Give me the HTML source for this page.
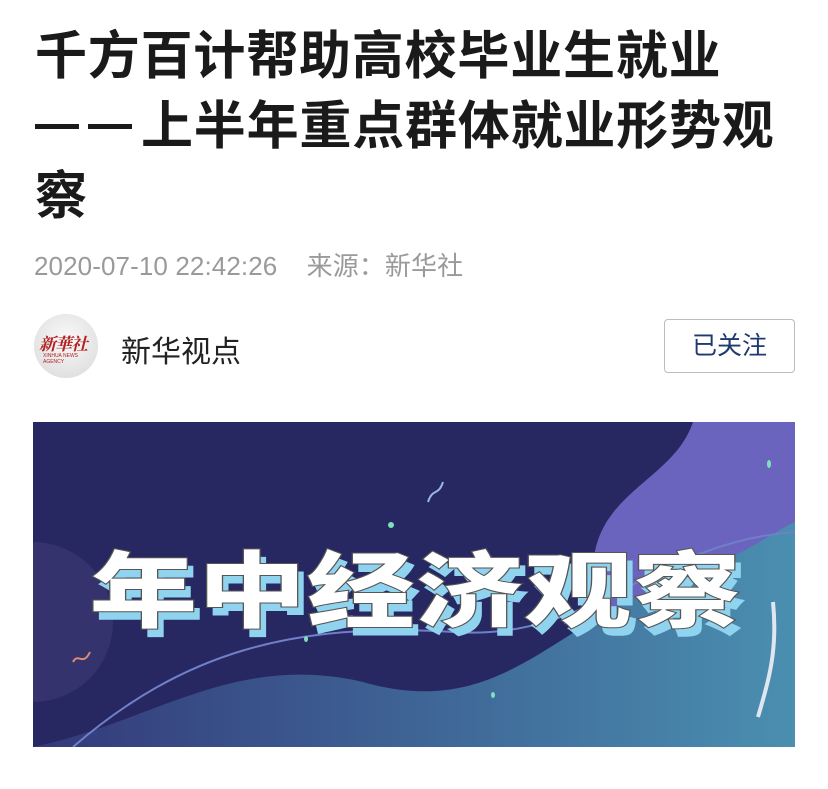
<!DOCTYPE html>
<html><head><meta charset="utf-8"><style>
html,body{margin:0;padding:0;background:#fff;width:828px;height:789px;overflow:hidden;font-family:"Liberation Sans","Noto Sans CJK SC",sans-serif}
.t{position:absolute;left:35px;top:22px;font-size:52px;font-weight:bold;color:#1a1a1a;line-height:70px;letter-spacing:0.8px;width:780px}
.d{display:inline-block;width:44px;height:5px;background:#1a1a1a;vertical-align:middle;margin-right:9px;position:relative;top:-4px}
.m{position:absolute;left:34px;top:246px;font-size:26px;color:#9a9a9a;letter-spacing:0.1px}
.av{position:absolute;left:34px;top:314px;width:64px;height:64px;border-radius:50%;background:radial-gradient(circle at 50% 40%,#fafafa,#d8d8d8)}
.av span{position:absolute;left:5px;top:16px;font-family:"Noto Serif CJK SC",serif;color:#b22020;font-size:17px;font-weight:bold;font-style:italic;letter-spacing:-1px}
.av i{position:absolute;left:9px;top:39px;font-size:5px;color:#b22020;font-style:normal}
.n{position:absolute;left:121px;top:327px;font-size:30px;color:#222}
.b{position:absolute;left:664px;top:319px;width:129px;height:52px;border:1px solid #b8bcc4;border-radius:4px;font-size:25px;color:#1e3a6e;text-align:center;line-height:52px}
.img{position:absolute;left:33px;top:422px;width:762px;height:325px}
</style></head><body>
<div class="t">千方百计帮助高校毕业生就业<br><span class="d"></span><span class="d"></span>上半年重点群体就业形势观<br>察</div>
<div class="m">2020-07-10 22:42:26&nbsp;&nbsp;&nbsp;&nbsp;来源：新华社</div>
<div class="av"><span>新華社</span><i>XINHUA NEWS AGENCY</i></div>
<div class="n">新华视点</div>
<div class="b">已关注</div>
<svg class="img" viewBox="0 0 762 325" xmlns="http://www.w3.org/2000/svg">
<defs><linearGradient id="g" x1="0" y1="0" x2="1" y2="0"><stop offset="0" stop-color="#33397a"/><stop offset="1" stop-color="#4a8fb0"/></linearGradient></defs>
<rect width="762" height="325" fill="#272762"/>
<path d="M660 0 C640 60 560 70 560 150 C560 220 700 210 762 180 L762 0Z" fill="#6a64be"/>
<circle cx="0" cy="200" r="80" fill="#34336e"/>
<path d="M0 325 C120 300 200 230 330 260 C470 300 520 200 640 160 C700 140 740 110 762 100 L762 325Z" fill="url(#g)"/>
<path d="M40 325 C150 230 260 200 420 210 C560 220 620 120 762 110" stroke="#6f80c8" stroke-width="2" fill="none"/>
<path d="M740 180 C745 230 735 260 725 295" stroke="#dfe6f0" stroke-width="4" fill="none"/>
<path d="M395 80 C400 65 405 75 410 60" stroke="#9ab7e0" stroke-width="2" fill="none"/>
<ellipse cx="736" cy="42" rx="2" ry="4" fill="#7fe0c0"/><ellipse cx="358" cy="103" rx="3" ry="3" fill="#7fe0c0"/><ellipse cx="273" cy="217" rx="2" ry="3" fill="#7fe0c0"/><ellipse cx="460" cy="273" rx="2" ry="3" fill="#7fe0c0"/>
<path d="M40 240 C45 230 50 245 57 230" stroke="#e08a70" stroke-width="2" fill="none"/>
<text x="62" y="207" textLength="652" lengthAdjust="spacingAndGlyphs" font-family="Noto Sans CJK SC,sans-serif" font-weight="900" font-size="84" fill="#8fd3ee">年中经济观察</text>
<text x="56" y="199" textLength="652" lengthAdjust="spacingAndGlyphs" font-family="Noto Sans CJK SC,sans-serif" font-weight="900" font-size="84" fill="#ffffff" stroke="#555" stroke-width="1">年中经济观察</text>
</svg>
</body></html>
